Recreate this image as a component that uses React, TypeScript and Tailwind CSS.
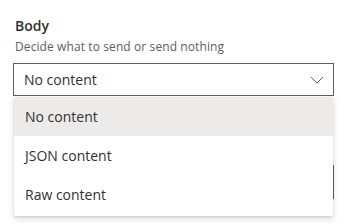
import { useState } from "react";

const options = ["No content", "JSON content", "Raw content"];

export default function App() {
  const [selected] = useState("No content");

  return (
    <div
      className="min-h-[224px] w-[351px] bg-white pl-[13px] pr-[17px] pt-[16px] text-[#323130]"
      style={{ fontFamily: '"Open Sans", "Noto Sans", sans-serif' }}
    >
      <div className="pl-[2px] text-[14px] font-semibold leading-[20px]">Body</div>
      <div className="mt-[3px] pl-[2px] text-[12px] leading-[16px] tracking-[0.1px] text-[#605e5c]">
        Decide what to send or send nothing
      </div>

      <div className="relative mt-[8px]">
        <div className="flex h-[33px] w-full items-center justify-between border border-[#605e5c] bg-white pl-[10px] pr-[8px]">
          <span className="text-[14px]">{selected}</span>
          <svg width="14" height="8" viewBox="0 0 14 8" className="mr-[1px]">
            <path d="M1 1 L7 7 L13 1" fill="none" stroke="#605e5c" strokeWidth="1" />
          </svg>
        </div>

        {/* open list */}
        <ul className="absolute left-[1px] right-[1px] top-[34px] z-10 bg-white pb-[2px] shadow-[0_3.2px_7.2px_rgba(0,0,0,0.132),0_0.6px_1.8px_rgba(0,0,0,0.108)]">
          {options.map((o) => (
            <li
              key={o}
              className={`flex h-[39px] items-center pl-[11px] text-[14px] ${
                o === selected ? "bg-[#edebe9]" : "bg-white"
              }`}
            >
              {o}
            </li>
          ))}
        </ul>
      </div>

      {/* next field, mostly hidden under the list */}
      <div className="mt-[69px] h-[34px] w-full border-r border-[#605e5c]" />
    </div>
  );
}
